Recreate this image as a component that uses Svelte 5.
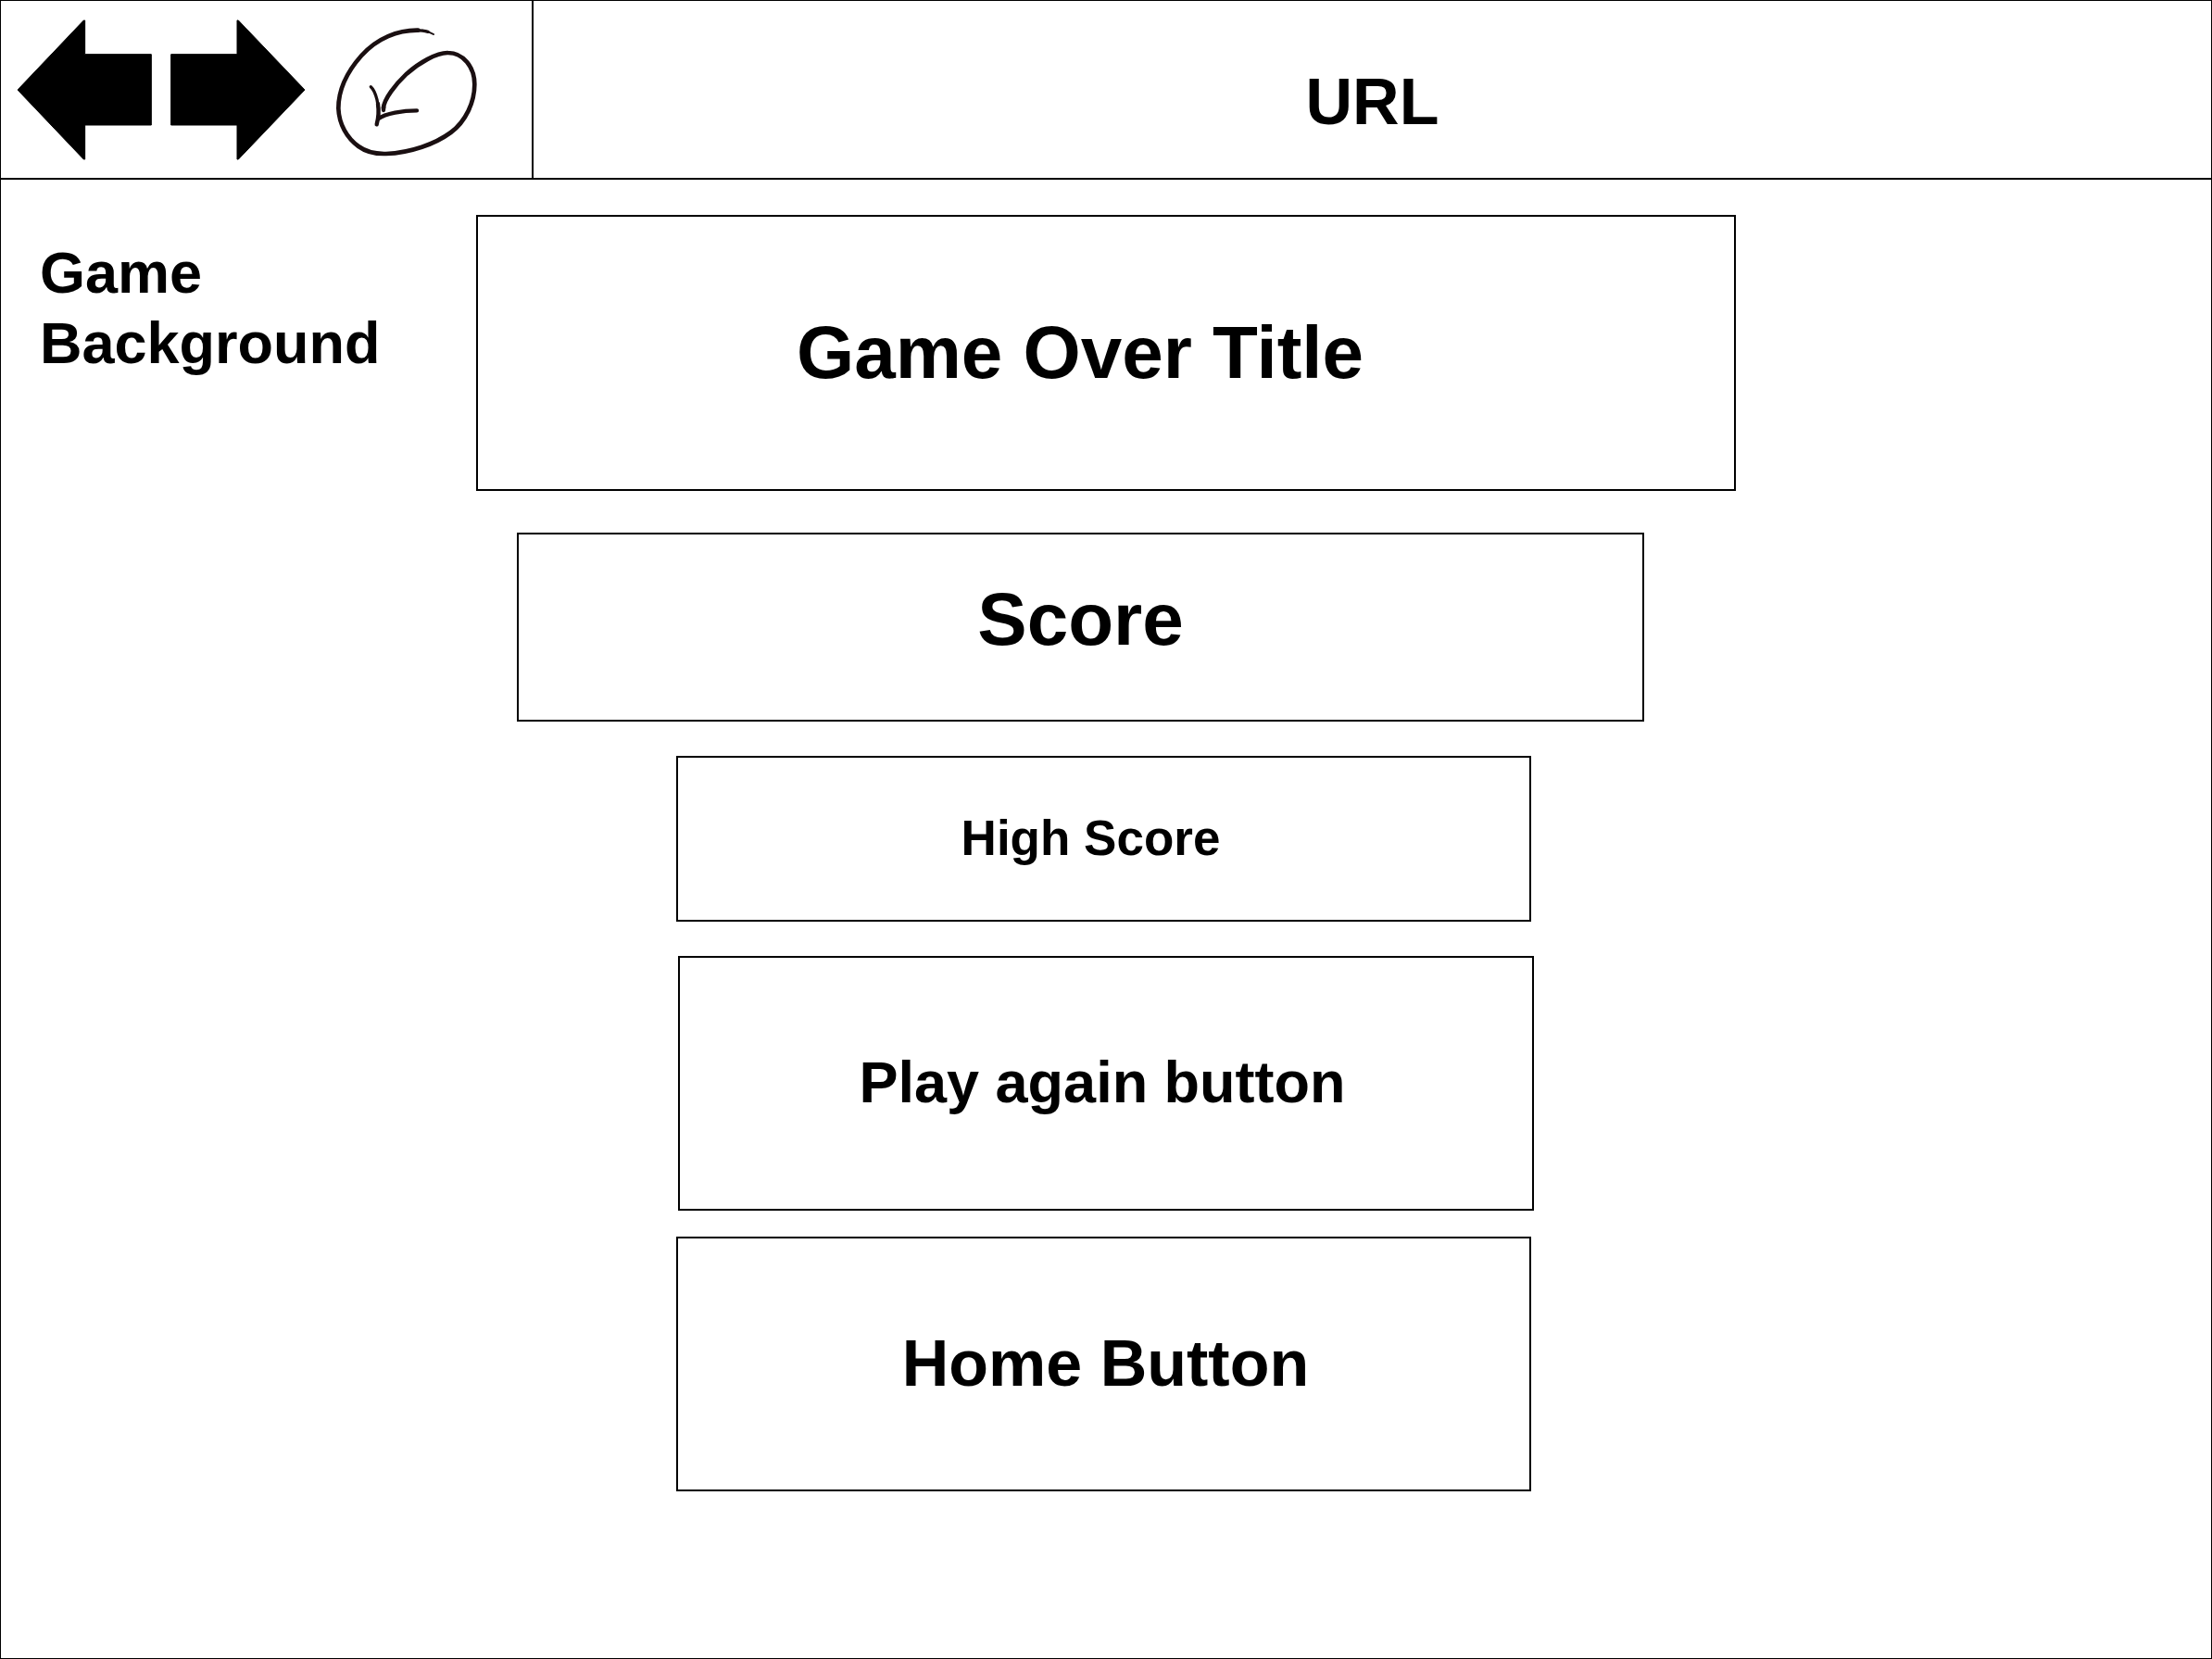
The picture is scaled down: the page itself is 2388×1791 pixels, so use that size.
<script>
  let address = $state('URL');
</script>

<div class="screen">
  <header class="toolbar">
    <nav class="controls" aria-label="Browser controls">
      <button class="control arrow" type="button" aria-label="Back">
        <svg viewBox="54 62 438 456" aria-hidden="true">
          <path d="M57 290 271 65H275V175H490V404H275V515H271Z" fill="#000" stroke="#000" stroke-width="3" stroke-linejoin="round" />
        </svg>
      </button>
      <button class="control arrow" type="button" aria-label="Forward">
        <svg viewBox="552 62 438 456" aria-hidden="true">
          <path d="M987 290 772 65H768V175H554V404H768V515H772Z" fill="#000" stroke="#000" stroke-width="3" stroke-linejoin="round" />
        </svg>
      </button>
      <button class="control reload" type="button" aria-label="Reload">
        <svg viewBox="60 62 480 456" aria-hidden="true" fill="none" stroke="#1a0f11" stroke-linecap="round" stroke-linejoin="round">
          <path d="M384 110C374 104 362 99 348 97" stroke-width="6" />
          <path d="M366 102C350 97 338 97 325 97" stroke-width="10" />
          <path
            d="M334 97C270 96 201 122 150 180C104 232 76 292 76 350C78 402 104 446 141 473C167 492 196 498 230 497C310 494 390 465 440 428C488 393 517 330 517 272C517 216 480 170 431 170C394 169 336 203 297 238C262 271 222 322 222 350"
            stroke-width="14"
          />
          <path d="M222 345V356" stroke-width="13" />
          <path d="M181 280C199 296 208 345 206 374" stroke-width="10" />
          <path d="M204 335C207 356 206 380 200 402" stroke-width="13" />
          <path d="M205 384C228 366 285 357 330 357" stroke-width="13" />
        </svg>
      </button>
    </nav>
    <input class="address" type="text" aria-label="Address" bind:value={address} />
  </header>

  <main class="game">
    <p class="backdrop">Game Background</p>
    <section class="panel">
      <h1 class="box title">Game Over Title</h1>
      <div class="box score">Score</div>
      <div class="box high-score">High Score</div>
      <button class="box play" type="button">Play again button</button>
      <button class="box home" type="button">Home Button</button>
    </section>
  </main>
</div>

<style>
  :global(body) {
    margin: 0;
    background: #fff;
  }

  .screen,
  .screen * {
    box-sizing: border-box;
  }

  .screen {
    display: flex;
    flex-direction: column;
    min-height: 100vh;
    border: 1px solid #000;
    background: #fff;
    color: #000;
    font-family: 'Liberation Sans', Arial, Helvetica, sans-serif;
    font-weight: 700;
  }

  .toolbar {
    display: flex;
    min-height: 193px;
    border-bottom: 2px solid #000;
  }

  .controls {
    display: flex;
    align-items: center;
    padding: 0 54px 0 17px;
    border-right: 2px solid #000;
  }

  .control {
    padding: 0;
    border: 0;
    background: none;
    cursor: pointer;
  }

  .control svg {
    display: block;
    width: 100%;
    height: 152px;
  }

  .arrow {
    width: 146px;
    margin-right: 20px;
  }

  .reload {
    width: 160px;
    margin-left: 10px;
  }

  .address {
    flex: 1;
    min-width: 0;
    padding: 26px 0 0;
    border: 0;
    outline: 0;
    background: none;
    color: inherit;
    font: inherit;
    font-size: 70px;
    text-align: center;
  }

  .game {
    display: grid;
    grid-template-columns: 513px 1fr 513px;
    padding-top: 38px;
  }

  .backdrop {
    margin: 0;
    padding: 24px 80px 0 42px;
    font-size: 63px;
    line-height: 76px;
  }

  .panel {
    display: flex;
    flex-direction: column;
  }

  .box {
    display: flex;
    align-items: center;
    justify-content: center;
    margin: 0;
    padding: 0;
    border: 2px solid #000;
    border-radius: 0;
    background: #fff;
    color: inherit;
    font: inherit;
  }

  .title {
    min-height: 298px;
    padding-right: 56px;
    font-size: 80px;
  }

  .score {
    min-height: 204px;
    margin: 45px 99px 0 44px;
    padding-bottom: 16px;
    font-size: 80px;
  }

  .high-score {
    min-height: 179px;
    margin: 37px 221px 0 216px;
    padding: 0 28px 2px 0;
    font-size: 53px;
  }

  .play,
  .home {
    min-height: 275px;
    cursor: pointer;
  }

  .play {
    margin: 37px 218px 0 218px;
    padding: 0 8px 4px 0;
    font-size: 63px;
  }

  .home {
    margin: 28px 221px 0 216px;
    padding: 0 0 2px 4px;
    font-size: 70px;
  }
</style>
